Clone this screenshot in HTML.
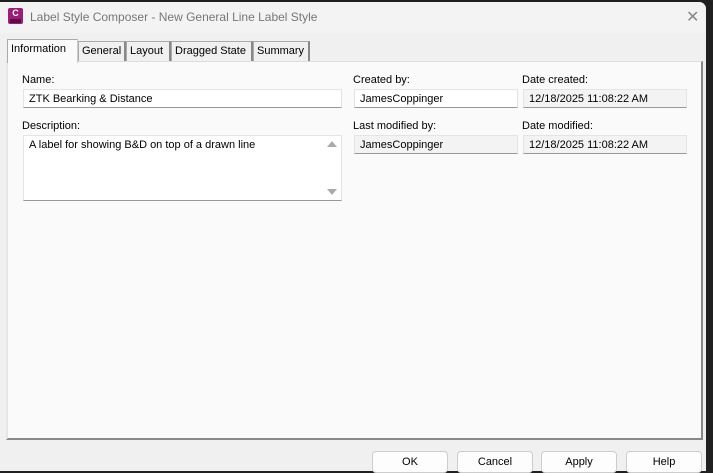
<!DOCTYPE html>
<html><head><style>
*{margin:0;padding:0;box-sizing:border-box}
body{width:713px;height:471px;overflow:hidden;background:#202020;font-family:"Liberation Sans",sans-serif;font-size:11px;color:#000;position:relative}
.win{position:absolute;left:0;top:2px;width:706px;height:469px;background:#f0f0f0;border-top-right-radius:7px}
.title{position:absolute;left:0;top:0;width:706px;height:31px;background:#f3f3f3;border-top-right-radius:7px}
.title .t{position:absolute;left:30px;top:8px;font-size:12px;color:#777}
.icon{position:absolute;left:8px;top:6px;width:15px;height:16px;background:#9c1d76;border-radius:2px;color:#fff;font-size:9px;font-weight:bold;text-align:center;line-height:11px}
.icon span{position:absolute;left:2px;bottom:1px;width:11px;height:4px;background:#5a0e44}
.x{position:absolute;left:686px;top:5px;font-size:16px;color:#888}
.tab{position:absolute;top:39px;height:20px;border:1px solid #aaa;border-bottom:none;background:#f0f0f0;padding:3px 3px;font-size:11px;border-right:2px solid #888}
.tab.a{background:#fafafa;top:37px;height:24px;border-right:1px solid #ccc;z-index:2}
.panel{position:absolute;left:6px;top:59px;width:697px;height:379px;background:#fafafa;border-left:2px solid #e6e6e6;border-top:1px solid #ddd;border-right:2px solid #888;border-bottom:2px solid #888}
.lbl{position:absolute;font-size:11px}
.in{position:absolute;height:19px;background:#fff;border:1px solid #e4e4e4;border-bottom:1px solid #999;padding:3px 5px;font-size:11px}
.ro{background:#f3f3f3}
.btn{position:absolute;top:451px;width:76px;height:22px;border:1px solid #ccc;border-radius:4px;background:#fdfdfd;text-align:center;padding-top:4px;font-size:11px}
</style></head><body>
<div class="win">
<div class="title"><div class="icon">C<span></span></div><div class="t">Label Style Composer - New General Line Label Style</div><div class="x">✕</div></div>
<div class="panel">
<div class="lbl" style="left:14px;top:12px">Name:</div>
<div class="in" style="left:15px;top:27px;width:319px">ZTK Bearking &amp; Distance</div>
<div class="lbl" style="left:14px;top:58px">Description:</div>
<div class="in" style="left:15px;top:73px;width:319px;height:66px">A label for showing B&amp;D on top of a drawn line
<div style="position:absolute;right:4px;top:5px;width:0;height:0;border:5px solid transparent;border-bottom:6px solid #aaa;border-top:none"></div>
<div style="position:absolute;right:4px;bottom:5px;width:0;height:0;border:5px solid transparent;border-top:6px solid #aaa;border-bottom:none"></div></div>
<div class="lbl" style="left:345px;top:12px">Created by:</div>
<div class="in" style="left:346px;top:27px;width:164px">JamesCoppinger</div>
<div class="lbl" style="left:514px;top:12px">Date created:</div>
<div class="in ro" style="left:515px;top:27px;width:164px">12/18/2025 11:08:22 AM</div>
<div class="lbl" style="left:345px;top:58px">Last modified by:</div>
<div class="in ro" style="left:346px;top:73px;width:164px">JamesCoppinger</div>
<div class="lbl" style="left:514px;top:58px">Date modified:</div>
<div class="in ro" style="left:515px;top:73px;width:164px">12/18/2025 11:08:22 AM</div>
</div>
</div>
<div class="tab a" style="left:7px;width:71px;top:39px">Information</div>
<div class="tab" style="left:78px;width:48px;top:41px">General</div>
<div class="tab" style="left:126px;width:45px;top:41px">Layout</div>
<div class="tab" style="left:171px;width:82px;top:41px">Dragged State</div>
<div class="tab" style="left:253px;width:57px;top:41px">Summary</div>
<div class="btn" style="left:372px">OK</div>
<div class="btn" style="left:457px">Cancel</div>
<div class="btn" style="left:541px">Apply</div>
<div class="btn" style="left:626px">Help</div>
</body></html>
